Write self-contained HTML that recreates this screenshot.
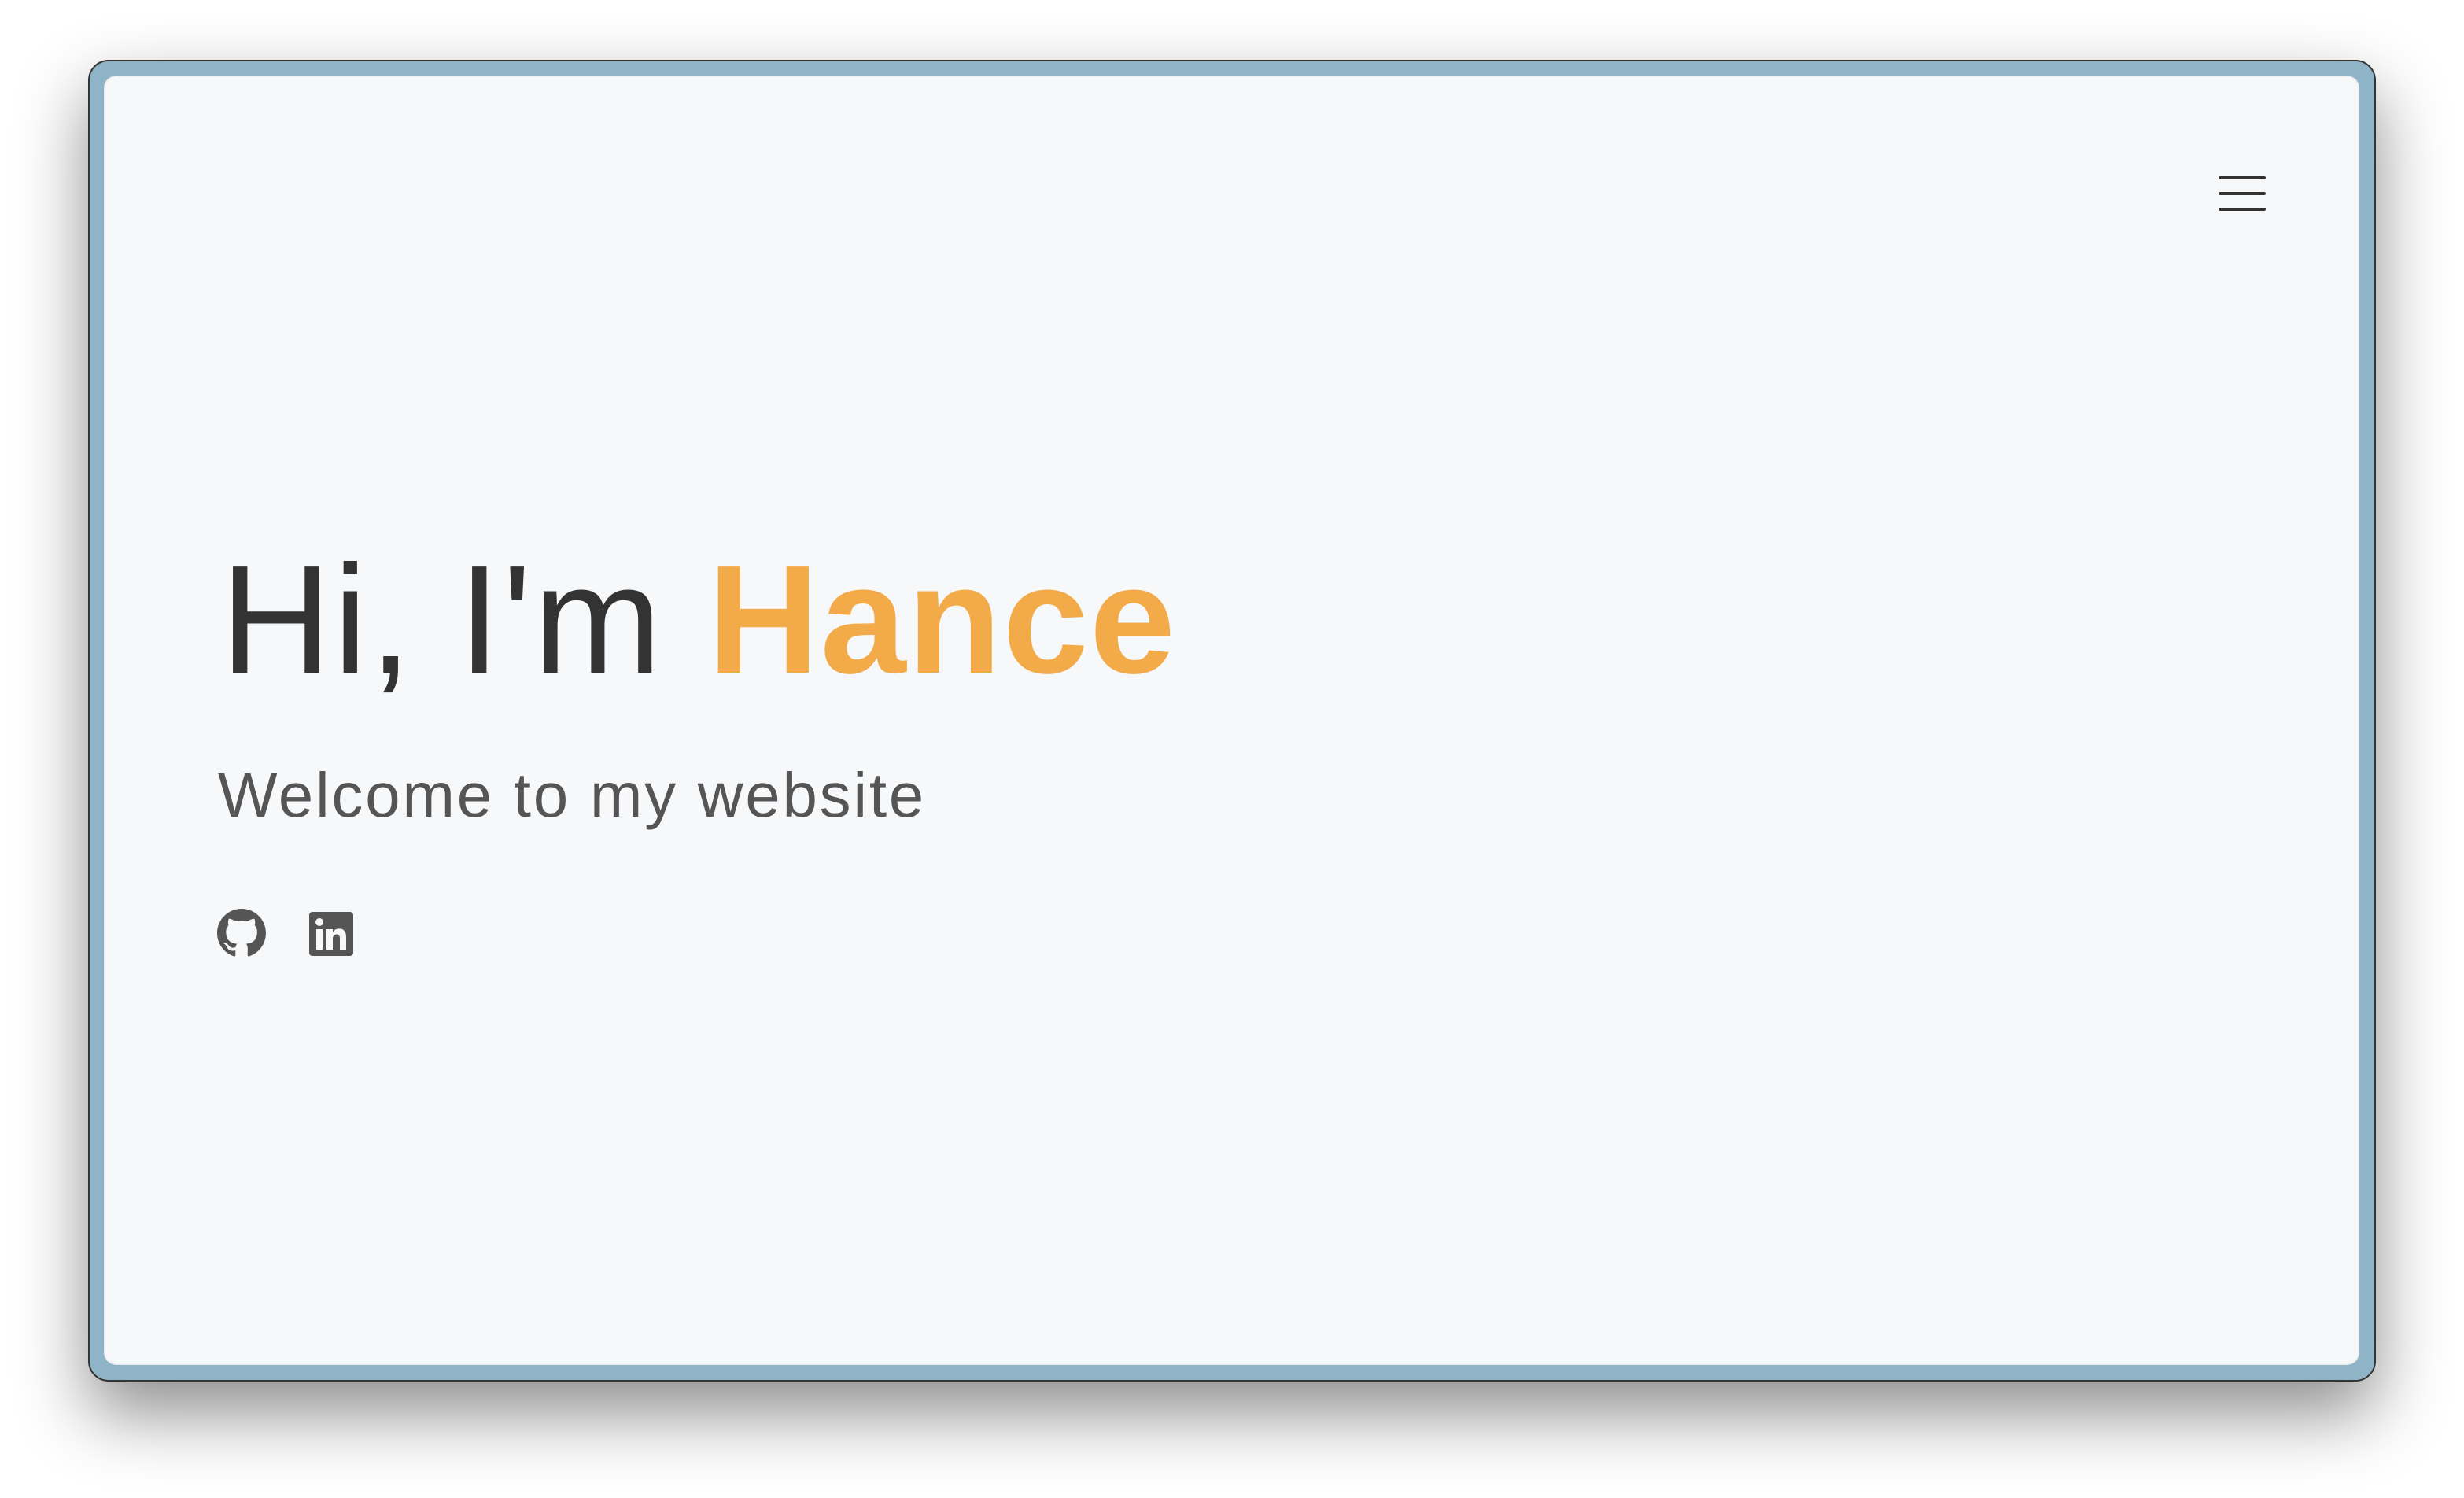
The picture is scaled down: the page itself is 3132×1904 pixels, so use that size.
<!DOCTYPE html>
<html><head><meta charset="utf-8"><style>
html,body{margin:0;padding:0;width:3132px;height:1904px;background:#fff;overflow:hidden;font-family:"Liberation Sans",sans-serif}
.frame{position:absolute;left:112px;top:76px;width:2908px;height:1680px;box-sizing:border-box;background:#8fb3c7;border:2px solid #333;border-radius:26px;box-shadow:0 40px 90px rgba(0,0,0,.45)}
.inner{position:absolute;left:132px;top:96px;width:2867px;height:1639px;background:#f7f8fa;border-radius:16px;box-shadow:inset 0 0 3px rgba(0,0,0,.15)}
.h{position:absolute;left:280px;top:678px;font-size:196px;line-height:220px;color:#333;white-space:nowrap;font-weight:300;letter-spacing:2px}
.h b{color:#f3ab4a;font-weight:700;letter-spacing:1.5px}
.s{position:absolute;left:277px;top:966px;font-size:80px;line-height:90px;color:#555;white-space:nowrap;letter-spacing:2.7px}
.ham div{position:absolute;left:2820px;width:60px;height:4px;border-radius:2px;background:#333}
</style></head><body>
<div class="frame"></div>
<div class="inner"></div>
<div class="ham"><div style="top:224px"></div><div style="top:244px"></div><div style="top:264px"></div></div>
<div class="h">Hi, I'm <b>Hance</b></div>
<div class="s">Welcome to my website</div>
<svg style="position:absolute;left:276px;top:1155px" width="62" height="62" viewBox="0 0 16 16"><path fill="#555" d="M8 0C3.580 0 0 3.58 0 8c0 3.54 2.29 6.53 5.47 7.59.4.07.55-.17.55-.38 0-.19-.01-.82-.01-1.49-2.010.37-2.530-.49-2.690-.94-.09-.23-.48-.94-.82-1.13-.28-.15-.68-.52-.01-.53.63-.01 1.08.58 1.23.82.72 1.21 1.87.87 2.33.66.07-.52.28-.87.51-1.07-1.78-.2-3.64-.89-3.64-3.95 0-.87.31-1.59.82-2.15-.08-.2-.36-1.02.08-2.12 0 0 .67-.21 2.2.82.64-.18 1.32-.27 2-.27.68 0 1.36.09 2 .27 1.53-1.04 2.2-.82 2.2-.82.44 1.1.16 1.92.08 2.12.51.56.82 1.27.82 2.15 0 3.07-1.87 3.75-3.65 3.95.29.25.54.73.54 1.48 0 1.07-.01 1.93-.01 2.2 0 .21.15.46.55.38A8.013 8.013 0 0016 8c0-4.42-3.58-8-8-8z"/></svg>
<svg style="position:absolute;left:393px;top:1159px" width="56" height="56" viewBox="0 0 56 56"><rect width="56" height="56" rx="4" fill="#555"/><circle cx="13" cy="13" r="5" fill="#f7f8fa"/><rect x="9" y="22" width="8" height="26" fill="#f7f8fa"/><path fill="#f7f8fa" d="M22 22h8v4c1.5-3 4.5-4.6 8-4.6 6 0 9 3.6 9 10.6V48h-8V34c0-3.5-1.2-5.5-4-5.5s-5 2-5 5.5v14h-8z"/></svg>
</body></html>
